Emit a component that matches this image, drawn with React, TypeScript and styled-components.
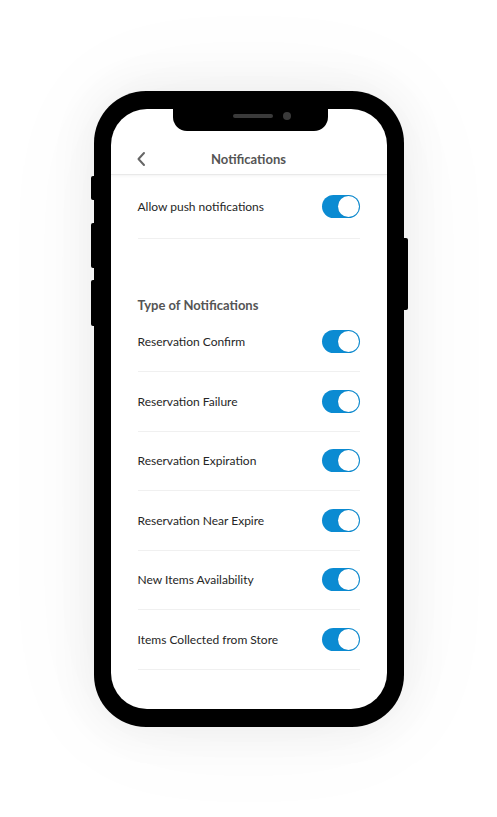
import React, { useState } from "react";
import styled, { createGlobalStyle } from "styled-components";

const GlobalStyle = createGlobalStyle`
  html, body {
    margin: 0;
    padding: 0;
    background: #ffffff;
  }
  * {
    box-sizing: border-box;
  }
`;

const Page = styled.div`
  width: 100%;
  height: 100vh;
  display: flex;
  align-items: center;
  justify-content: center;
  font-family: Lato, "Noto Sans", sans-serif;
`;

const Phone = styled.div`
  position: relative;
  width: 310px;
  height: 636px;
  background: #000;
  border-radius: 52px;
  padding: 18px 17px;
  box-shadow: 0 0 50px rgba(0, 0, 0, 0.07), 0 0 120px rgba(0, 0, 0, 0.04);
`;

const SideButton = styled.div<{ $side: "left" | "right"; $top: number; $h: number }>`
  position: absolute;
  top: ${(p) => p.$top}px;
  height: ${(p) => p.$h}px;
  width: 5px;
  background: #000;
  ${(p) =>
    p.$side === "left"
      ? "left: -3px; border-radius: 2px 0 0 2px;"
      : "right: -4px; border-radius: 0 2px 2px 0;"}
`;

const Screen = styled.div`
  position: relative;
  width: 100%;
  height: 100%;
  background: #fff;
  border-radius: 36px;
  overflow: hidden;
  display: flex;
  flex-direction: column;
`;

const Notch = styled.div`
  position: absolute;
  top: 0;
  left: 62px;
  width: 155px;
  height: 22px;
  background: #000;
  border-radius: 0 0 14px 14px;
  display: flex;
  align-items: center;
  justify-content: center;
  gap: 10px;
  padding-left: 24px;
`;

const Speaker = styled.div`
  width: 40px;
  height: 4px;
  border-radius: 2px;
  background: #3a3a3a;
  margin-top: -8px;
`;

const Camera = styled.div`
  width: 8px;
  height: 8px;
  border-radius: 50%;
  background: #3a3a3a;
  margin-top: -8px;
`;

const Header = styled.div`
  position: relative;
  height: 66px;
  flex-shrink: 0;
  display: flex;
  align-items: flex-end;
  justify-content: center;
  padding-bottom: 7px;
  border-bottom: 1px solid #e9e9e9;
  box-shadow: 0 1px 3px rgba(0, 0, 0, 0.05);
`;

const BackButton = styled.button`
  position: absolute;
  left: 22px;
  bottom: 6px;
  width: 16px;
  height: 18px;
  padding: 0;
  border: none;
  background: none;
  display: flex;
  align-items: center;
  justify-content: center;
`;

const Title = styled.div`
  font-size: 13px;
  line-height: 16px;
  font-weight: 700;
  color: #555;
`;

const Content = styled.div`
  padding: 0 27px;
  display: flex;
  flex-direction: column;
`;

const Row = styled.div<{ $h: number }>`
  height: ${(p) => p.$h}px;
  display: flex;
  align-items: center;
  justify-content: space-between;
  border-bottom: 1px solid #f0f0f0;
`;

const Label = styled.span`
  font-size: 12px;
  color: #262626;
`;

const SectionTitle = styled.div`
  margin-top: 58px;
  font-size: 13px;
  line-height: 16px;
  font-weight: 700;
  color: #555;
`;

const Track = styled.button<{ $on: boolean }>`
  position: relative;
  width: 38px;
  height: 23px;
  padding: 0;
  border: none;
  border-radius: 12px;
  background: ${(p) => (p.$on ? "#0b8bd2" : "#d8d8d8")};
  cursor: pointer;
`;

const Knob = styled.span<{ $on: boolean }>`
  position: absolute;
  top: 1px;
  left: ${(p) => (p.$on ? "16px" : "1px")};
  width: 21px;
  height: 21px;
  border-radius: 50%;
  background: #fff;
  box-shadow: 0 0 0 0.5px rgba(0, 0, 0, 0.05);
`;

const Toggle = ({ initial = true }: { initial?: boolean }) => {
  const [on, setOn] = useState(initial);
  return (
    <Track $on={on} onClick={() => setOn(!on)}>
      <Knob $on={on} />
    </Track>
  );
};

const types = [
  "Reservation Confirm",
  "Reservation Failure",
  "Reservation Expiration",
  "Reservation Near Expire",
  "New Items Availability",
  "Items Collected from Store",
];

export default function App() {
  return (
    <Page>
      <GlobalStyle />
      <Phone>
        <SideButton $side="left" $top={85} $h={24} />
        <SideButton $side="left" $top={132} $h={45} />
        <SideButton $side="left" $top={189} $h={46} />
        <SideButton $side="right" $top={147} $h={72} />
        <Screen>
          <Notch>
            <Speaker />
            <Camera />
          </Notch>
          <Header>
            <BackButton aria-label="Back">
              <svg width="10" height="16" viewBox="0 0 10 16">
                <path
                  d="M8 2 L2.5 8 L8 14"
                  fill="none"
                  stroke="#666"
                  strokeWidth="2"
                  strokeLinecap="round"
                  strokeLinejoin="round"
                />
              </svg>
            </BackButton>
            <Title>Notifications</Title>
          </Header>
          <Content>
            <Row $h={64}>
              <Label>Allow push notifications</Label>
              <Toggle />
            </Row>
            <SectionTitle>Type of Notifications</SectionTitle>
            {types.map((t) => (
              <Row key={t} $h={59.5}>
                <Label>{t}</Label>
                <Toggle />
              </Row>
            ))}
          </Content>
        </Screen>
      </Phone>
    </Page>
  );
}
